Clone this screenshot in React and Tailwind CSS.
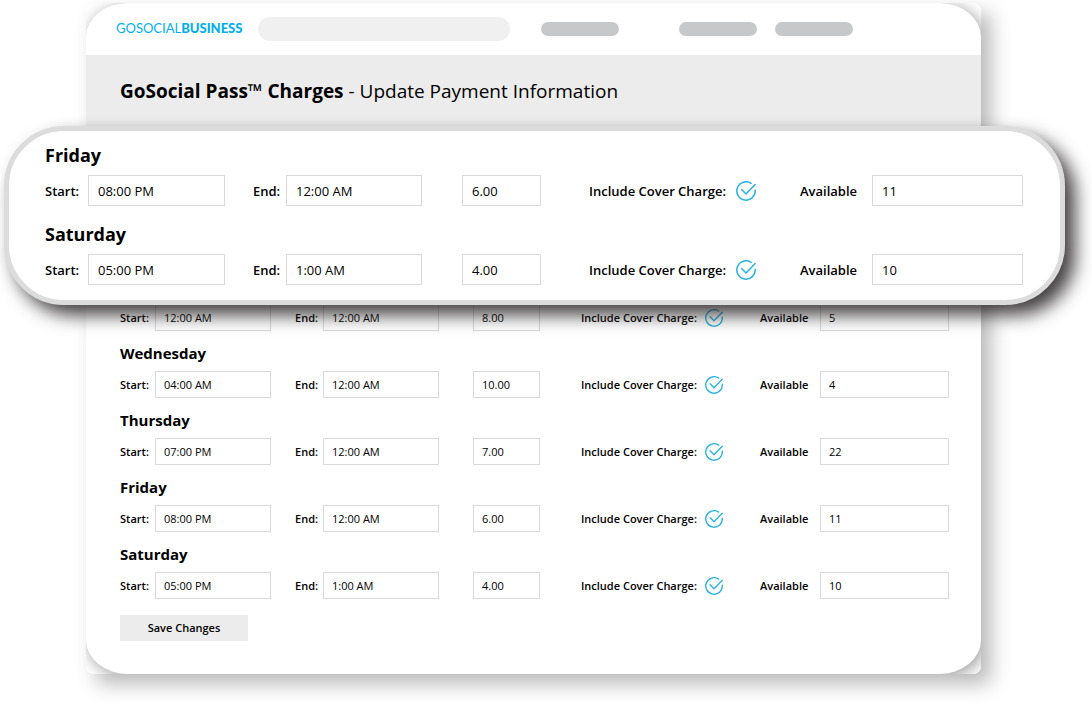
import { useId } from "react";

const featured = [
  { day: "Friday", start: "08:00 PM", end: "12:00 AM", price: "6.00", available: "11" },
  { day: "Saturday", start: "05:00 PM", end: "1:00 AM", price: "4.00", available: "10" },
];

const days = [
  { start: "12:00 AM", end: "12:00 AM", price: "8.00", available: "5" },
  { day: "Wednesday", start: "04:00 AM", end: "12:00 AM", price: "10.00", available: "4" },
  { day: "Thursday", start: "07:00 PM", end: "12:00 AM", price: "7.00", available: "22" },
  { day: "Friday", start: "08:00 PM", end: "12:00 AM", price: "6.00", available: "11" },
  { day: "Saturday", start: "05:00 PM", end: "1:00 AM", price: "4.00", available: "10" },
];

const sizes = {
  small: {
    row: "grid-cols-[175fr_178fr_108fr_179fr_189fr] text-[11px]",
    input: "h-[27px] px-2 text-[11px]",
    start: "pr-6",
    startLabel: "w-[35px]",
    end: "pr-[34px]",
    endLabel: "w-7",
    price: "pr-[41px]",
    availableLabel: "w-[60px]",
    icon: "size-[18px]",
    check: "gap-2",
    heading: "text-[15px] mb-[6px]",
  },
  large: {
    row: "grid-cols-[208fr_209fr_127fr_211fr_223fr] text-[13px]",
    input: "h-[31px] px-[9px] text-[13px]",
    start: "pr-7",
    startLabel: "w-[43px]",
    end: "pr-10",
    endLabel: "w-[33px]",
    price: "pr-12",
    availableLabel: "w-[72px]",
    icon: "size-5",
    check: "gap-[10px]",
    heading: "text-[18px] mb-2",
  },
};

function CheckMark({ className }) {
  return (
    <svg viewBox="0 0 60 60" fill="none" stroke="#2bb3e0" strokeWidth="4.6" strokeLinecap="round" strokeLinejoin="round" className={className} aria-hidden="true">
      <path d="M57.6 27.5A27.6 27.6 0 1 1 45.5 7" />
      <path d="M17 25.5 30 39 57.5 10.5" />
    </svg>
  );
}

function DayRow({ entry, size }) {
  const id = useId();
  const s = sizes[size];
  const box = `w-full min-w-0 flex-1 border border-[#d9d9d9] bg-white font-normal text-black outline-none ${s.input}`;
  return (
    <section>
      {entry.day && <h2 className={`font-bold leading-6 ${s.heading}`}>{entry.day}</h2>}
      <div className={`grid items-center font-semibold ${s.row}`}>
        <div className={`flex items-center ${s.start}`}>
          <label htmlFor={`${id}s`} className={`shrink-0 pt-[2px] ${s.startLabel}`}>Start:</label>
          <input id={`${id}s`} defaultValue={entry.start} className={box} />
        </div>
        <div className={`flex items-center ${s.end}`}>
          <label htmlFor={`${id}e`} className={`shrink-0 pt-[2px] ${s.endLabel}`}>End:</label>
          <input id={`${id}e`} defaultValue={entry.end} className={box} />
        </div>
        <div className={`flex ${s.price}`}>
          <input aria-label="Price" defaultValue={entry.price} className={box} />
        </div>
        <label className={`flex items-center whitespace-nowrap ${s.check}`}>
          <span className="pt-[2px]">Include Cover Charge:</span>
          <span className={`grid shrink-0 ${s.icon}`}>
            <input type="checkbox" defaultChecked className="peer col-start-1 row-start-1 size-full appearance-none rounded-full" />
            <CheckMark className="pointer-events-none invisible col-start-1 row-start-1 size-full peer-checked:visible" />
          </span>
        </label>
        <div className="flex items-center">
          <label htmlFor={`${id}a`} className={`shrink-0 pt-[2px] ${s.availableLabel}`}>Available</label>
          <input id={`${id}a`} defaultValue={entry.available} className={box} />
        </div>
      </div>
    </section>
  );
}

export default function App() {
  return (
    <div className="min-h-screen overflow-hidden bg-white pt-[3px] pr-[111px] pb-8 pl-[86px] font-['Open_Sans',sans-serif] text-black">
      <div className="relative isolate rounded-lg shadow-[10px_10px_20px_rgba(0,0,0,0.28)]">
        <div className="absolute inset-0 -z-10 overflow-hidden rounded-lg bg-white">
          <div className="h-full rounded-[42px/34px] bg-white shadow-[3px_3px_16px_rgba(0,0,0,0.4)]" />
        </div>

        <header className="flex h-[52px] items-center pl-[30px]">
          <a href="#" className="w-[142px] shrink-0 font-['Lato',sans-serif] text-[13px] text-[#00aeef]">
            GOSOCIAL<span className="font-black">BUSINESS</span>
          </a>
          <input type="search" aria-label="Search" className="h-6 w-[252px] rounded-full bg-[#f0f0f0] px-4 text-[12px] outline-none" />
          <nav className="flex items-center pl-[31px]">
            <a href="#" aria-label="Home" className="mr-[60px] h-[14px] w-[78px] rounded-full bg-[#c7c8ca]" />
            <a href="#" aria-label="Account" className="mr-[18px] h-[14px] w-[78px] rounded-full bg-[#c7c8ca]" />
            <a href="#" aria-label="Help" className="h-[14px] w-[78px] rounded-full bg-[#c7c8ca]" />
          </nav>
        </header>

        <div className="flex h-[71px] items-center bg-[#ececec] px-[34px]">
          <h1 className="text-[19px] leading-7">
            <strong className="font-bold">GoSocial Pass™ Charges</strong> - Update Payment Information
          </h1>
        </div>

        <div className="relative z-10 -mr-[84px] -ml-[82px] flex flex-col gap-4 rounded-[60px] border-[5px] border-[#dcdcdc] bg-white pt-3 pr-[37px] pb-[15px] pl-9 shadow-[10px_10px_18px_rgba(35,31,32,0.85)]">
          {featured.map((entry) => (
            <DayRow key={entry.day} entry={entry} size="large" />
          ))}
        </div>

        <form className="-mt-px flex flex-col gap-[10px] pr-8 pb-[33px] pl-[34px]" onSubmit={(e) => e.preventDefault()}>
          {days.map((entry) => (
            <DayRow key={entry.start + entry.price} entry={entry} size="small" />
          ))}
          <button type="submit" className="mt-[6px] h-[26px] w-32 bg-[#ececec] text-[11px] font-semibold">
            Save Changes
          </button>
        </form>
      </div>
    </div>
  );
}
